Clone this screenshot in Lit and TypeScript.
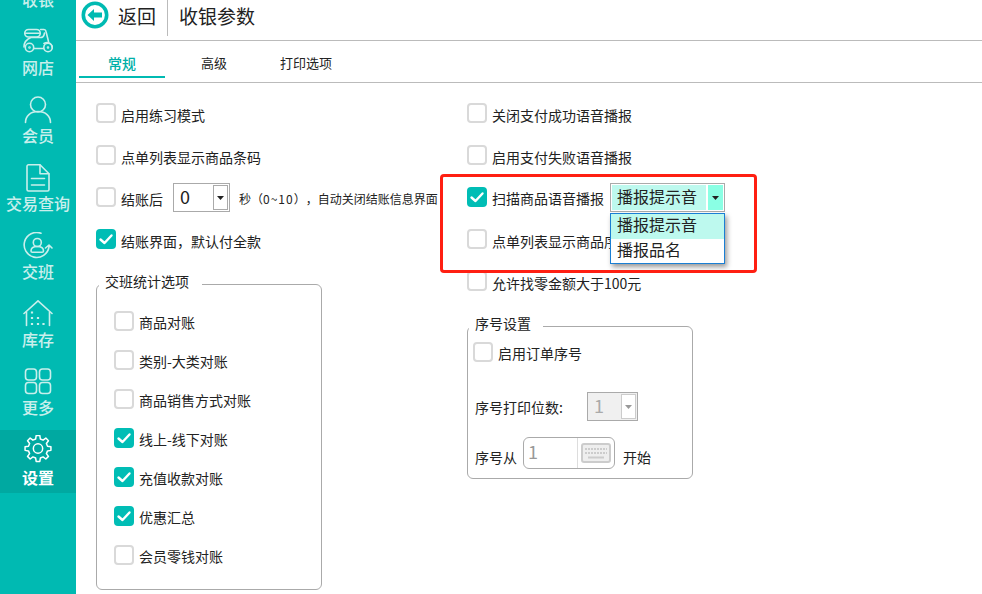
import { LitElement, html, css, svg } from "lit";
import { customElement } from "lit/decorators.js";

const gearPath = (() => {
  const teeth = 8, R = 14, r = 10.5, cx = 15, cy = 14.5;
  const pts: string[] = [];
  for (let i = 0; i < teeth; i++) {
    const a = (i * 2 * Math.PI) / teeth - Math.PI / 2;
    const w = Math.PI / teeth;
    const p = (rad: number, ang: number) => `${(cx + rad * Math.cos(ang)).toFixed(2)} ${(cy + rad * Math.sin(ang)).toFixed(2)}`;
    pts.push(`${i === 0 ? "M" : "L"}${p(r, a - w * 0.62)}`);
    pts.push(`L${p(R, a - w * 0.36)}`);
    pts.push(`L${p(R, a + w * 0.36)}`);
    pts.push(`L${p(r, a + w * 0.62)}`);
  }
  return pts.join(" ") + "Z";
})();

const icons: Record<string, unknown> = {
  cash: svg`<rect x="6" y="6" width="18" height="20" rx="2"/>`,
  shop: svg`
    <path d="M5.500 1.500h8a3.750 3.750 0 0 1 0 7.500h-8a3.750 3.750 0 0 1 0-7.500Z"/>
    <path d="M2.500 5.200h14"/>
    <path d="M17.500 1.500h3.500c1 0 1.800.8 2 2l2.500 10"/>
    <path d="M1 19c0-5 3-8 7-9.500h9.500c2 0 3-.5 3.500-2.500l.5-2"/>
    <path d="M11 20.500h9.500"/>
    <path d="M21 15.500c4-2.500 8 0 8.500 4.500"/>
    <circle cx="6.500" cy="19.500" r="4.200"/>
    <circle cx="25" cy="19.500" r="4.200"/>
    <circle cx="6.500" cy="19.500" r=".5"/>
    <circle cx="25" cy="19.500" r=".5"/>`,
  member: svg`
    <circle cx="15" cy="8.500" r="7.500"/>
    <path d="M2.500 26.500c0-6.500 5-11 12.500-11s12.500 4.500 12.500 11"/>`,
  doc: svg`
    <path d="M5.500 .8h11.500l9 9v15.700a1.500 1.500 0 0 1-1.500 1.500h-19A1.500 1.500 0 0 1 4 25.500v-23.200a1.500 1.500 0 0 1 1.500-1.500Z"/>
    <path d="M17 1v8.800h8.800"/>
    <path d="M8.500 14.500h13M8.500 21h13"/>`,
  shift: svg`
    <path d="M18 1.200A12.500 12.500 0 1 0 26 15"/>
    <path d="M22.500 16l3.500-3 3 3"/>
    <circle cx="14.300" cy="10.500" r="4"/>
    <path d="M8 19c0-3 2.700-4.500 6.300-4.500s6.200 1.500 6.200 4.500c0 .8-.5 1.300-1.300 1.300H9.300c-.8 0-1.300-.5-1.300-1.300Z"/>`,
  stock: svg`
    <path d="M1 13.500L15 .8l14 12.700"/>
    <path d="M3.500 12v13.500"/>
    <path d="M26.500 12v13.500"/>
    <path class="dots" d="M9 11.500v2M9 17v2M9 23v2M15 17v2M15 23v2M20.500 23v2"/>`,
  more: svg`
    <rect x="2.500" y="1" width="11" height="11" rx="3"/>
    <rect x="16.500" y="1" width="11" height="11" rx="3"/>
    <rect x="2.500" y="14.500" width="11" height="11" rx="3"/>
    <rect x="16.500" y="14.500" width="11" height="11" rx="3"/>`,
  gear: svg`<path d="${gearPath}"/><circle cx="15" cy="14.500" r="5"/>`,
};

const nav = [
  { label: "收银", icon: "cash" },
  { label: "网店", icon: "shop" },
  { label: "会员", icon: "member" },
  { label: "交易查询", icon: "doc" },
  { label: "交班", icon: "shift" },
  { label: "库存", icon: "stock" },
  { label: "更多", icon: "more" },
  { label: "设置", icon: "gear", active: true },
];

const checkMark = html`<svg viewBox="0 0 20 20" width="20" height="20"><path d="M4.500 10.500l4 3.500 7-7.500" fill="none" stroke="#fff" stroke-width="2.400" stroke-linecap="round" stroke-linejoin="round"/></svg>`;

const caret = html`<svg class="caret" viewBox="0 0 7 4" width="7" height="4"><path d="M0 0h7L3.500 4Z" fill="currentColor"/></svg>`;

@customElement("app-root")
export class AppRoot extends LitElement {
  static styles = css`
    :host {
      display: flex;
      position: relative;
      width: 982px;
      height: 594px;
      overflow: hidden;
      background: #fff;
      color: #222;
      font-family: "Noto Sans CJK SC", "Noto Sans", sans-serif;
      font-size: 14px;
      line-height: 20px;
      text-spacing-trim: space-all;
    }
    .side {
      width: 76px;
      flex: none;
      background: #00bab2;
      overflow: hidden;
    }
    .side-list { margin-top: -44px; display: flex; flex-direction: column; }
    .nav {
      height: 68px;
      padding-top: 4px;
      box-sizing: border-box;
      display: flex;
      flex-direction: column;
      align-items: center;
      color: #c9efec;
      font-size: 16px;
      font-weight: 500;
      line-height: 21px;
    }
    .nav svg {
      width: 30px;
      height: 30px;
      margin-bottom: -1.500px;
      fill: none;
      stroke: currentColor;
      stroke-width: 1.600;
      stroke-linecap: round;
      stroke-linejoin: round;
    }
    .nav .dots { stroke-width: 2.200; stroke-linecap: butt; }
    .nav.active {
      height: 63px;
      margin-top: -2px;
      padding-top: 5px;
      background: #00a9a1;
      color: #fff;
      font-weight: 700;
    }
    .nav.active svg { margin-bottom: 4px; height: 28px; }

    .main { flex: 1; min-width: 0; display: flex; flex-direction: column; }
    .top {
      height: 41px;
      box-sizing: border-box;
      border-bottom: 1px solid #bbb;
      display: flex;
      align-items: flex-start;
      font-size: 19px;
      line-height: 32px;
      color: #222;
    }
    .back-icon { width: 28px; height: 28px; margin: 1px 9px 0 5px; flex: none; }
    .back-text { width: 49px; }
    .top .title { border-left: 1px solid #bbb; height: 36px; padding-left: 11px; }
    .tabs {
      height: 42px;
      box-sizing: border-box;
      border-bottom: 1px solid #bbb;
      display: flex;
      gap: 6px;
      padding-left: 3px;
      font-size: 13px;
    }
    .tab {
      width: 86px;
      height: 37px;
      box-sizing: border-box;
      padding-top: 12px;
      text-align: center;
      line-height: 20px;
    }
    .tab.active {
      color: #00b0a8;
      font-weight: 500;
      font-size: 14px;
      border-bottom: 2px solid #00bab2;
    }
    .content {
      display: grid;
      grid-template-columns: 371px 1fr;
      padding: 20px 0 0 20px;
    }
    .col { display: flex; flex-direction: column; align-items: flex-start; }
    .row { height: 42px; display: flex; align-items: flex-start; white-space: nowrap; }
    .box {
      width: 20px;
      height: 20px;
      box-sizing: border-box;
      border: 2px solid #d9d9d9;
      border-radius: 4px;
      flex: none;
      background: #fff;
    }
    .box svg { display: block; }
    .box.on { background: #00bdb5; border: none; }
    .label { margin: 2px 0 0 5px; }
    .row.tight .label { margin-top: 1px; }

    .num {
      width: 57px;
      height: 29px;
      box-sizing: border-box;
      margin: -4px 9px 0 10px;
      border: 1px solid #aaa;
      display: flex;
      justify-content: space-between;
      padding: 1px 1px 1px 6px;
      font-size: 18px;
      line-height: 22px;
    }
    .spin {
      width: 15px;
      box-sizing: border-box;
      border: 1px solid #aaa;
      display: flex;
      align-items: center;
      justify-content: center;
      background: #fff;
      color: #222;
    }
    .note { font-size: 12px; margin-top: 2px; }
    .range { letter-spacing: 1px; }

    .group {
      position: relative;
      box-sizing: border-box;
      border: 1px solid #aaa;
      border-radius: 6px;
    }
    .legend {
      position: absolute;
      background: #fff;
      font-size: 14px;
      white-space: nowrap;
    }
    .g1 {
      width: 226px;
      height: 306px;
      margin-top: 13px;
      padding: 26px 0 0 17px;
    }
    .g1 .legend { left: 2px; top: -11px; padding: 0 13px 0 6px; line-height: 14px; }
    .g1 .row { height: 39px; }
    .g1 .label { margin-top: 1px; }
    .g2 {
      width: 226px;
      height: 153px;
      margin-top: 13px;
      padding: 15px 0 0 5px;
      display: flex;
      flex-direction: column;
    }
    .g2 .legend { left: 1px; top: -11px; padding: 0 12px 0 6px; line-height: 14px; }
    .g2 .row { height: auto; }
    .g2 .seq { height: 48px; }
    .g2 .label { margin-top: 1px; }
    .g2 .digits { margin-top: 2px; margin-bottom: 16px; height: 29px; align-items: center; padding-left: 2px; }
    .g2 .from { height: 32px; padding-left: 2px; }
    .t { margin-top: 10px; }
    .digit-sel {
      width: 51px;
      height: 29px;
      box-sizing: border-box;
      margin: 0 0 0 24px;
      background: #f0f0f0;
      border: 1px solid #aaa;
      display: flex;
      justify-content: space-between;
      padding: 1px 1px 1px 6px;
      font-size: 18px;
      line-height: 22px;
      color: #aaa;
    }
    .digit-sel .spin { color: #999; border-color: #ccc; }
    .kbd-input {
      width: 92px;
      height: 32px;
      box-sizing: border-box;
      margin: 0 8px 0 6px;
      border: 1px solid #aaa;
      border-radius: 6px;
      display: flex;
      justify-content: space-between;
      padding-left: 4px;
      font-size: 18px;
      line-height: 26px;
      color: #999;
    }
    .kbd {
      width: 36px;
      border-left: 1px solid #ddd;
      display: flex;
      align-items: center;
      justify-content: center;
    }

    .sel-wrap { position: relative; margin: -4px 0 0 6px; }
    .sel {
      width: 115px;
      height: 29px;
      box-sizing: border-box;
      border: 1px solid #aaa;
      padding: 1px;
      display: flex;
      gap: 2px;
      font-size: 16px;
      line-height: 23px;
    }
    .sel .val { flex: 1; background: #bdf9ee; padding-left: 5px; }
    .sel .btn {
      width: 15px;
      background: #8affe4;
      display: flex;
      align-items: center;
      justify-content: center;
    }
    .menu {
      position: absolute;
      z-index: 2;
      left: 0;
      top: 30px;
      width: 115px;
      box-sizing: border-box;
      border: 1px solid #1a7fd4;
      background: #fff;
      box-shadow: 2px 3px 5px rgba(0, 0, 0, 0.4);
      font-size: 16px;
      line-height: 21px;
    }
    .menu div { padding-left: 6px; height: 24px; }
    .menu .hl { background: #bdf9ee; height: 25px; }
    .mark {
      position: absolute;
      z-index: 3;
      left: 440px;
      top: 174px;
      width: 317px;
      height: 99px;
      box-sizing: border-box;
      border: 3px solid #ff1f12;
      border-radius: 4px;
      pointer-events: none;
    }
  `;

  private check(on = false) {
    return html`<span class="box ${on ? "on" : ""}">${on ? checkMark : ""}</span>`;
  }

  private row(text: string, on = false) {
    return html`<div class="row">${this.check(on)}<span class="label">${text}</span></div>`;
  }

  render() {
    return html`
      <aside class="side">
        <div class="side-list">
          ${nav.map(
            (n) => html`<div class="nav ${n.active ? "active" : ""}">
              <svg viewBox="0 0 30 30">${icons[n.icon]}</svg>
              <span>${n.label}</span>
            </div>`
          )}
        </div>
      </aside>
      <section class="main">
        <header class="top">
          <svg class="back-icon" viewBox="0 0 28 28">
            <circle cx="14" cy="14" r="11.700" fill="#fff" stroke="#00bab2" stroke-width="3.600"/>
            <path d="M6.500 14L13 8v3.500h8v5h-8V20Z" fill="#00bab2"/>
          </svg>
          <span class="back-text">返回</span>
          <span class="title">收银参数</span>
        </header>
        <nav class="tabs">
          <div class="tab active">常规</div>
          <div class="tab">高级</div>
          <div class="tab">打印选项</div>
        </nav>
        <div class="content">
          <div class="col">
            ${this.row("启用练习模式")}
            ${this.row("点单列表显示商品条码")}
            <div class="row">
              ${this.check()}<span class="label">结账后</span>
              <span class="num"><span>0</span><span class="spin">${caret}</span></span>
              <span class="note">秒（<span class="range">0~10</span>），自动关闭结账信息界面</span>
            </div>
            ${this.row("结账界面，默认付全款", true)}
            <div class="group g1">
              <span class="legend">交班统计选项</span>
              ${this.row("商品对账")}
              ${this.row("类别-大类对账")}
              ${this.row("商品销售方式对账")}
              ${this.row("线上-线下对账", true)}
              ${this.row("充值收款对账", true)}
              ${this.row("优惠汇总", true)}
              ${this.row("会员零钱对账")}
            </div>
          </div>
          <div class="col">
            ${this.row("关闭支付成功语音播报")}
            ${this.row("启用支付失败语音播报")}
            <div class="row tight">
              ${this.check(true)}<span class="label">扫描商品语音播报</span>
              <div class="sel-wrap">
                <div class="sel"><span class="val">播报提示音</span><span class="btn">${caret}</span></div>
                <div class="menu"><div class="hl">播报提示音</div><div>播报品名</div></div>
              </div>
            </div>
            ${this.row("点单列表显示商品序号")}
            ${this.row("允许找零金额大于100元")}
            <div class="group g2">
              <span class="legend">序号设置</span>
              <div class="row seq">${this.check()}<span class="label">启用订单序号</span></div>
              <div class="row digits">
                <span>序号打印位数:</span>
                <span class="digit-sel"><span>1</span><span class="spin">${caret}</span></span>
              </div>
              <div class="row from">
                <span class="t">序号从</span>
                <span class="kbd-input"><span>1</span><span class="kbd">
                  <svg viewBox="0 0 30 20" width="30" height="20">
                    <rect x="1" y="1" width="28" height="18" rx="2" fill="#eee" stroke="#ccc" stroke-width="2"/>
                    <path d="M4 6h22M4 10h22" stroke="#ccc" stroke-width="2" stroke-dasharray="2 1"/>
                    <path d="M7 14.500h16" stroke="#ccc" stroke-width="2"/>
                  </svg>
                </span></span>
                <span class="t">开始</span>
              </div>
            </div>
          </div>
        </div>
      </section>
      <div class="mark"></div>
    `;
  }
}
